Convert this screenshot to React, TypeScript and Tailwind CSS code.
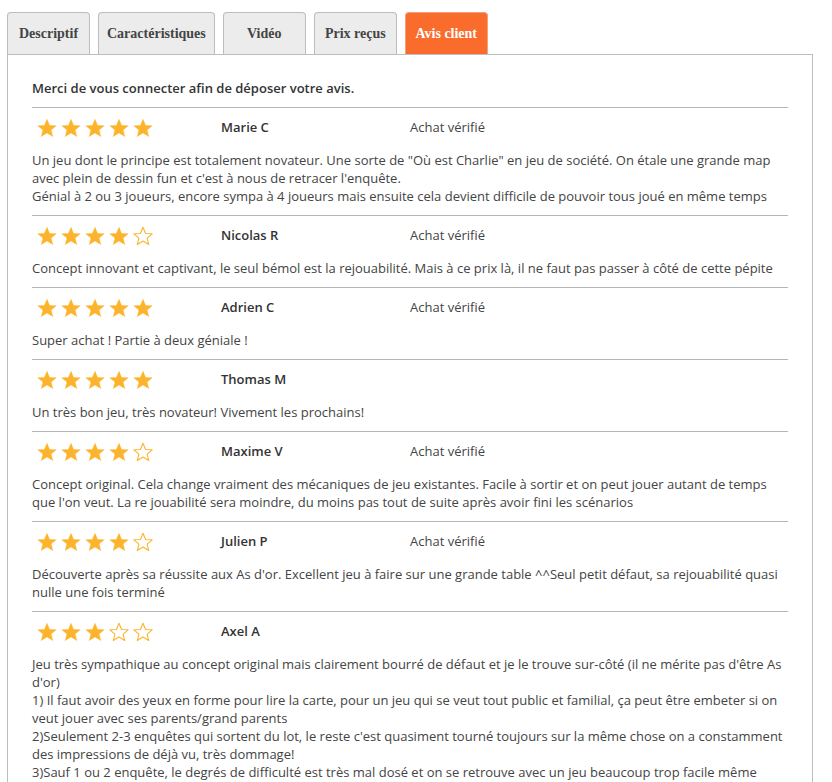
const tabs = ["Descriptif", "Caractéristiques", "Vidéo", "Prix reçus", "Avis client"]

type Review = { stars: number; name: string; verified: boolean; lines: string[] }

const reviews: Review[] = [
  {
    stars: 5,
    name: "Marie C",
    verified: true,
    lines: [
      "Un jeu dont le principe est totalement novateur. Une sorte de \"Où est Charlie\" en jeu de société. On étale une grande map avec plein de dessin fun et c'est à nous de retracer l'enquête.",
      "Génial à 2 ou 3 joueurs, encore sympa à 4 joueurs mais ensuite cela devient difficile de pouvoir tous joué en même temps",
    ],
  },
  {
    stars: 4,
    name: "Nicolas R",
    verified: true,
    lines: ["Concept innovant et captivant, le seul bémol est la rejouabilité. Mais à ce prix là, il ne faut pas passer à côté de cette pépite"],
  },
  { stars: 5, name: "Adrien C", verified: true, lines: ["Super achat ! Partie à deux géniale !"] },
  { stars: 5, name: "Thomas M", verified: false, lines: ["Un très bon jeu, très novateur! Vivement les prochains!"] },
  {
    stars: 4,
    name: "Maxime V",
    verified: true,
    lines: [
      "Concept original. Cela change vraiment des mécaniques de jeu existantes. Facile à sortir et on peut jouer autant de temps que l'on veut. La re jouabilité sera moindre, du moins pas tout de suite après avoir fini les scénarios",
    ],
  },
  {
    stars: 4,
    name: "Julien P",
    verified: true,
    lines: ["Découverte après sa réussite aux As d'or. Excellent jeu à faire sur une grande table ^^Seul petit défaut, sa rejouabilité quasi nulle une fois terminé"],
  },
  {
    stars: 3,
    name: "Axel A",
    verified: false,
    lines: [
      "Jeu très sympathique au concept original mais clairement bourré de défaut et je le trouve sur-côté (il ne mérite pas d'être As d'or)",
      "1) Il faut avoir des yeux en forme pour lire la carte, pour un jeu qui se veut tout public et familial, ça peut être embeter si on veut jouer avec ses parents/grand parents",
      "2)Seulement 2-3 enquêtes qui sortent du lot, le reste c'est quasiment tourné toujours sur la même chose on a constamment des impressions de déjà vu, très dommage!",
      "3)Sauf 1 ou 2 enquête, le degrés de difficulté est très mal dosé et on se retrouve avec un jeu beaucoup trop facile même pour des enfants.",
    ],
  },
]

const Star = ({ full }: { full: boolean }) => (
  <svg width="20" height="20" viewBox="0 0 24 24" className="shrink-0">
    <path
      d="M12 1.5l3.1 7.4 7.9.5-6.1 5.1 2 7.8L12 18l-6.9 4.3 2-7.8L1 9.4l7.9-.5z"
      fill={full ? "#fcb42c" : "none"}
      stroke="#fcb42c"
      strokeWidth={full ? 0.5 : 1.3}
      strokeLinejoin="round"
    />
  </svg>
)

export default function App() {
  return (
    <div className="bg-white min-h-screen pt-3 font-['Open_Sans',sans-serif] text-[13px] text-[#444]">
      <div className="flex gap-2 pl-[7px]">
        {tabs.map((t) => {
          const active = t === "Avis client"
          return (
            <div
              key={t}
              className={`h-[42px] min-w-[83px] px-[8px] flex items-center justify-center rounded-t-[4px] border border-b-0 font-['Liberation_Serif',serif] font-bold text-[14px] ${
                active ? "bg-[#fa6c2b] border-[#f0a27c] text-white" : "bg-[#ececec] border-[#bdbdbd] text-[#444]"
              }`}
            >
              {t}
            </div>
          )
        })}
      </div>
      <div className="ml-[7px] w-[806px] border border-[#bdbdbd] px-6 pt-6">
        <p className="leading-[18px] font-semibold text-[#333] mb-[10px]">Merci de vous connecter afin de déposer votre avis.</p>
        {reviews.map((r) => (
          <div key={r.name} className="border-t border-[#b5b5b5]">
            <div className="flex items-center h-6 mt-2">
              <div className="w-1/4 flex gap-1 pl-[5px]">
                {[0, 1, 2, 3, 4].map((i) => (
                  <Star key={i} full={i < r.stars} />
                ))}
              </div>
              <div className="w-1/4 font-semibold text-[#333]">{r.name}</div>
              <div className="w-1/4">{r.verified ? "Achat vérifié" : ""}</div>
            </div>
            <div className="mt-[11px] mb-[10px] leading-[18px]">
              {r.lines.map((l, i) => (
                <p key={i}>{l}</p>
              ))}
            </div>
          </div>
        ))}
      </div>
    </div>
  )
}
